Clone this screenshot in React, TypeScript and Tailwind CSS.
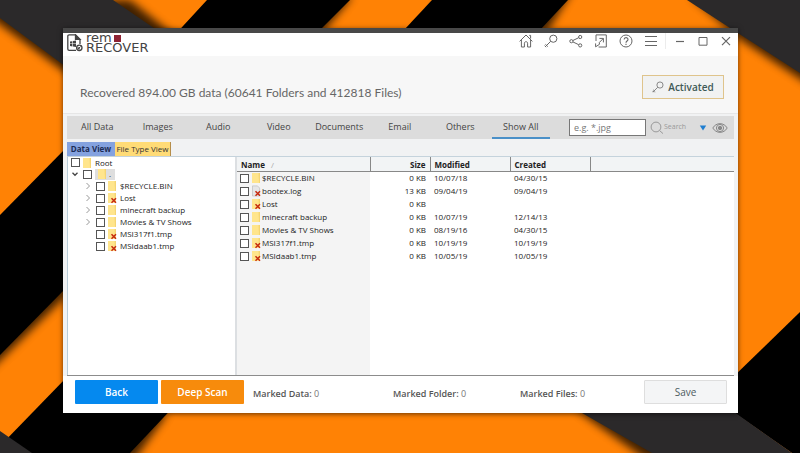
import type { ReactNode } from 'react';
import clsx from 'clsx';

type IconProps = {
	className?: string;
};

type TreeItem = {
	name: string;
	deleted?: boolean;
	expandable?: boolean;
};

type FileRow = {
	name: string;
	size: string;
	modified: string;
	created: string;
	kind?: 'folder' | 'file';
	deleted?: boolean;
};

const categories = [
	'All Data',
	'Images',
	'Audio',
	'Video',
	'Documents',
	'Email',
	'Others',
	'Show All',
];

const treeItems: TreeItem[] = [
	{ name: '$RECYCLE.BIN', expandable: true },
	{ name: 'Lost', expandable: true, deleted: true },
	{ name: 'minecraft backup', expandable: true },
	{ name: 'Movies & TV Shows', expandable: true },
	{ name: 'MSI317f1.tmp', deleted: true },
	{ name: 'MSIdaab1.tmp', deleted: true },
];

const files: FileRow[] = [
	{ name: '$RECYCLE.BIN', size: '0 KB', modified: '10/07/18', created: '04/30/15' },
	{ name: 'bootex.log', size: '13 KB', modified: '09/04/19', created: '09/04/19', kind: 'file', deleted: true },
	{ name: 'Lost', size: '0 KB', modified: '', created: '', deleted: true },
	{ name: 'minecraft backup', size: '0 KB', modified: '10/07/19', created: '12/14/13' },
	{ name: 'Movies & TV Shows', size: '0 KB', modified: '08/19/16', created: '04/30/15' },
	{ name: 'MSI317f1.tmp', size: '0 KB', modified: '10/19/19', created: '10/19/19', deleted: true },
	{ name: 'MSIdaab1.tmp', size: '0 KB', modified: '10/05/19', created: '10/05/19', deleted: true },
];

function Wallpaper() {
	return (
		<svg
			viewBox="0 0 800 453"
			preserveAspectRatio="xMidYMid slice"
			className="absolute inset-0 h-full w-full"
			aria-hidden="true"
		>
			<defs>
				<filter id="soft" x="-20%" y="-20%" width="140%" height="140%">
					<feGaussianBlur stdDeviation="4" />
				</filter>
			</defs>
			<rect width="800" height="453" fill="#ff8205" />
			{/* Shadows thrown by the bands */}
			<g fill="#000" opacity="0.75" filter="url(#soft)">
				<path d="M-20 0 130 0 180 40 100 90 62 70 -20 10Z" />
				<path d="M207 10 353 -4 323 32 240 60Z" />
				<path d="M440 -10H573L547 32H430Z" />
				<path d="M-20 255 66 171 66 296 -20 380Z" />
				<path d="M62 410 168 413 134 460 40 460Z" />
				<path d="M690 -4H820V92L738 38Z" />
				<path d="M576 410H740V460H647Z" />
			</g>
			<path d="M207 0H350L320 30 240 116H100Z" fill="#000" />
			<path d="M432 0H568L540 30H404Z" fill="#000" />
			<path d="M0 215 66 148V288L0 355Z" fill="#000" />
			<path d="M0 446 66 378 180 400 130 453H0Z" fill="#000" />
			<path d="M0 0H113L180 46 100 92 0 18Z" fill="#2b292a" />
			<path d="M0 431 32 453H0Z" fill="#2b292a" />
			<path d="M687 0H800V73L730 28Z" fill="#2b292a" />
			<path d="M800 312V453H792L730 410V380Z" fill="#000" />
			<path d="M575 409H730L792 453H652Z" fill="#2b292a" />
		</svg>
	);
}

function LogoMark() {
	return (
		<svg viewBox="0 0 16 18" className="mt-px h-[18px] w-4" fill="none" stroke="#444" strokeWidth="1.3">
			<path d="M9 16.3H2.2C1.3 16.3.8 15.8.8 15V2.2C.8 1.4 1.3.9 2.2.9H8.5L13 5.4V10" />
			<path d="M8.5.9V5.4H13Z" fill="#444" />
			<path d="M3 7.6 5.4 7.2V9.5H3ZM6 7.1 9 6.6V9.5H6ZM3 10.1H5.4V12.4L3 12ZM6 10.1H9V12.9L6 12.5Z" fill="#444" stroke="none" />
			<circle cx="12.3" cy="13.8" r="2.7" fill="#fff" />
			<path d="M11 14.8 13.6 12.6M11.1 12.8V14.8H13" strokeWidth="1" />
		</svg>
	);
}

function HomeIcon() {
	return (
		<svg viewBox="0 0 14 14" className="size-3.5" fill="none" stroke="currentColor">
			<path d="M.6 7.4 7 1 13.4 7.4M2.4 6V13H5.4V9.2C5.4 7.2 8.6 7.2 8.6 9.2V13H11.6V6M10.3 1.4H11.6V4.6" />
		</svg>
	);
}

function KeyIcon({ className = 'size-3.5' }: IconProps) {
	return (
		<svg viewBox="0 0 14 14" className={className} fill="none" stroke="currentColor">
			<circle cx="9.3" cy="4.7" r="3.6" />
			<path d="M6.7 7.3 1 13M1.4 10.3 3.8 12.6M.6 11.6 2.2 13.2" />
		</svg>
	);
}

function ShareIcon() {
	return (
		<svg viewBox="0 0 14 14" className="size-3.5" fill="none" stroke="currentColor">
			<circle cx="2.4" cy="7.2" r="1.6" />
			<circle cx="11.2" cy="3" r="1.6" />
			<circle cx="11.2" cy="11.4" r="1.6" />
			<path d="M3.9 6.5 9.7 3.7M3.9 7.9 9.7 10.7" />
		</svg>
	);
}

function ExportIcon() {
	return (
		<svg viewBox="0 0 14 14" className="size-3.5" fill="none" stroke="currentColor">
			<path d="M2 7V.9H12.3V13H4.6" />
			<path d="M5.4 4.4H9.4V8.4M9.2 4.6 5.4 8.4V10.4L1.6 12.8V9.4" />
		</svg>
	);
}

function HelpIcon() {
	return (
		<svg viewBox="0 0 14 14" className="size-3.5" fill="none" stroke="currentColor">
			<circle cx="7" cy="7" r="6" />
			<path d="M5.1 5.6C5.1 3 9 3.1 9 5.4 9 7 7 7 7 8.8M7 9.8V11" strokeWidth="1.1" />
		</svg>
	);
}

function MenuIcon() {
	return (
		<svg viewBox="0 0 14 14" className="size-3.5" fill="none" stroke="currentColor">
			<path d="M1 2.5H13M1 7.5H13M1 11.5H13" />
		</svg>
	);
}

function MinimizeIcon() {
	return (
		<svg viewBox="0 0 14 14" className="size-3.5" fill="none" stroke="currentColor">
			<path d="M3 7.5H11" strokeWidth="1.2" />
		</svg>
	);
}

function MaximizeIcon() {
	return (
		<svg viewBox="0 0 14 14" className="size-3.5" fill="none" stroke="currentColor">
			<path d="M3 3.5H11V11.2H3Z" />
		</svg>
	);
}

function CloseIcon() {
	return (
		<svg viewBox="0 0 14 14" className="size-3.5" fill="none" stroke="currentColor">
			<path d="M3 3.2 11 11.2M11 3.2 3 11.2" strokeWidth="1.2" />
		</svg>
	);
}

function SearchIcon() {
	return (
		<svg viewBox="0 0 14 14" className="size-3.5" fill="none" stroke="currentColor">
			<circle cx="6" cy="6" r="4.9" />
			<path d="M9.6 9.6 13 12.6" />
		</svg>
	);
}

function EyeIcon() {
	return (
		<svg viewBox="0 0 16 12" className="h-3 w-4" fill="none" stroke="currentColor">
			<path d="M.8 6C4 .2 12 .2 15.2 6 12 11.8 4 11.8.8 6Z" />
			<circle cx="8" cy="6" r="3.6" />
			<circle cx="8" cy="6" r="1.7" fill="currentColor" />
		</svg>
	);
}

function EntryIcon({ kind = 'folder', deleted }: { kind?: 'folder' | 'file'; deleted?: boolean }) {
	return (
		<svg viewBox="0 0 10 12" className="h-3 w-2.5 shrink-0" aria-hidden="true">
			{kind === 'folder' ? (
				<>
					<path d="M1 1H7.5L9 2V11H1Z" fill="#ffe58c" />
					<path d="M7.5 1H9V11H8Z" fill="#f5d573" />
				</>
			) : (
				<path d="M1.5.9H6.5L8.6 3V11H1.5Z" fill="#e6e6e6" stroke="#b5b5b5" strokeWidth="0.6" />
			)}
			{deleted && <path d="M4.5 6.2 9 10.7M9 6.2 4.5 10.7" stroke="#c62a10" strokeWidth="1.5" />}
		</svg>
	);
}

function Chevron({ open }: { open?: boolean }) {
	return (
		<svg viewBox="0 0 8 8" className="size-2" fill="none" stroke={open ? '#444' : '#999'}>
			<path d={open ? 'M1.5 2.8 4 5.3 6.5 2.8' : 'M2.5 1 5.5 4 2.5 7'} strokeWidth={open ? 1.3 : 1} />
		</svg>
	);
}

function CheckBox({ label }: { label: string }) {
	return (
		<input
			type="checkbox"
			aria-label={label}
			className="size-[9px] shrink-0 appearance-none border border-[#555] bg-white checked:bg-[#555]"
		/>
	);
}

function ToolButton({ label, className, children }: { label: string; className: string; children: ReactNode }) {
	return (
		<button type="button" aria-label={label} className={clsx('flex h-4 items-center justify-center', className)}>
			{children}
		</button>
	);
}

function TitleBar() {
	return (
		<header className="flex h-[23px] items-start bg-white pr-px pl-1 text-[#666]">
			<div className="flex items-start gap-[3px]">
				<LogoMark />
				<p className="font-['DejaVu_Sans',sans-serif] text-[13px] leading-[10px] text-[#444]">
					rem
					<span className="ml-0.5 inline-block size-[7px] bg-[#8f2334]" />
					<br />
					RECOVER
				</p>
			</div>
			<div className="ml-auto flex items-center">
				<ToolButton label="Home" className="w-[25px]"><HomeIcon /></ToolButton>
				<ToolButton label="License" className="w-[25px]"><KeyIcon /></ToolButton>
				<ToolButton label="Share" className="w-[25px]"><ShareIcon /></ToolButton>
				<ToolButton label="Export" className="w-[25px]"><ExportIcon /></ToolButton>
				<ToolButton label="Help" className="w-[25px]"><HelpIcon /></ToolButton>
				<ToolButton label="Menu" className="w-[25px]"><MenuIcon /></ToolButton>
				<span className="mx-0.5 h-4 w-px bg-[#ececec]" />
				<ToolButton label="Minimize" className="w-[23px]"><MinimizeIcon /></ToolButton>
				<ToolButton label="Maximize" className="w-[23px]"><MaximizeIcon /></ToolButton>
				<ToolButton label="Close" className="w-[23px]"><CloseIcon /></ToolButton>
			</div>
		</header>
	);
}

function Summary() {
	return (
		<div className="flex h-[58px] items-start justify-between border-b border-[#e6e6e6] bg-[#f7f7f7] pr-3.5 pl-[17px]">
			<h1 className="pt-7 font-['Lato','Open_Sans',sans-serif] text-[12px] leading-[18px] text-[#666]">
				Recovered 894.00 GB data (60641 Folders and 412818 Files)
			</h1>
			<button
				type="button"
				className="mt-[19px] flex h-6 w-[82px] items-center justify-center gap-1 border border-[#dfc48c] bg-[#f1f2f2] text-[10px] font-semibold text-[#3f5a57]"
			>
				<KeyIcon className="size-3 text-[#777]" />
				Activated
			</button>
		</div>
	);
}

function CategoryBar() {
	return (
		<div className="mx-1 mt-0.5 flex h-[23px] items-center bg-[#dcdcdc]">
			<nav className="grid h-full flex-1 grid-cols-8">
				{categories.map((category) => (
					<button
						key={category}
						type="button"
						className="flex flex-col items-center text-[9px] leading-[21px] text-[#444]"
					>
						{category}
						{category === 'Show All' && <span className="h-0.5 w-[58px] bg-[#4a90c8]" />}
					</button>
				))}
			</nav>
			<form className="ml-[18px] flex items-center pr-1.5" onSubmit={(e) => e.preventDefault()}>
				<input
					type="text"
					aria-label="Search pattern"
					placeholder="e.g. *.jpg"
					className="h-[17px] w-[77px] border border-[#777] bg-white px-1 text-[9px] text-[#444] placeholder:text-[#777]"
				/>
				<button type="submit" className="ml-1 flex h-4 w-[41px] items-center text-[7px] text-[#999]">
					<SearchIcon />
					Search
				</button>
				<button type="button" aria-label="Search options" className="ml-2 flex h-4 w-2 items-center">
					<svg viewBox="0 0 8 6" className="h-1.5 w-2" fill="#1f7ed0">
						<path d="M.8.5H7.2L4 5.5Z" />
					</svg>
				</button>
				<button type="button" aria-label="Preview" className="ml-[5px] flex h-4 w-4 items-center text-[#888]">
					<EyeIcon />
				</button>
			</form>
		</div>
	);
}

function FolderTree() {
	return (
		<aside className="w-[168px] shrink-0 border-l border-[#b9cdd9] bg-white text-[8px] leading-3 text-[#222]">
			<ul>
				<li className="flex h-[11px] items-center pl-[3px]">
					<CheckBox label="Root" />
					<span className="ml-0.5"><EntryIcon /></span>
					<span className="ml-[3px]">Root</span>
				</li>
				<li>
					<div className="flex h-3 items-center pl-[3px]">
						<Chevron open />
						<span className="ml-1 flex"><CheckBox label="." /></span>
						<span className="ml-[3px] flex h-[11px] items-center gap-0.5 bg-[#dedede] pr-1 pl-0.5">
							<EntryIcon />.
						</span>
					</div>
					<ul>
						{treeItems.map((item) => (
							<li key={item.name} className="flex h-3 items-center pl-4">
								<span className="w-3">{item.expandable && <Chevron />}</span>
								<CheckBox label={item.name} />
								<span className="ml-0.5"><EntryIcon deleted={item.deleted} /></span>
								<span className="ml-[3px]">{item.name}</span>
							</li>
						))}
					</ul>
				</li>
			</ul>
		</aside>
	);
}

function FileTable() {
	return (
		<div className="relative flex-1 border-l-2 border-[#dcdfe2] bg-white">
			<div className="absolute inset-y-0 left-0 w-[133px] bg-[#f4f4f4]" />
			<table className="relative w-full table-fixed border-collapse text-[8px] leading-3 text-[#222]">
				<colgroup>
					<col className="w-[133px]" />
					<col className="w-[60px]" />
					<col className="w-[80px]" />
					<col className="w-[80px]" />
					<col />
				</colgroup>
				<thead>
					<tr className="border-b border-[#888] bg-[#f2f4f5] text-left text-[#222]">
						<th className="border-r border-[#888] p-0 pt-0.5 pl-1">
							Name <span className="ml-1 font-normal text-[#aaa]">/</span>
						</th>
						<th className="border-r border-[#888] p-0 pt-0.5 pr-1 text-right">Size</th>
						<th className="border-r border-[#888] p-0 pt-0.5 pl-1">Modified</th>
						<th className="border-r border-[#888] p-0 pt-0.5 pl-1">Created</th>
						<th className="p-0" />
					</tr>
				</thead>
				<tbody>
					{files.map((file) => (
						<tr key={file.name} className="h-[13px]">
							<td className="p-0">
								<div className="flex h-3 items-center pl-[3px]">
									<CheckBox label={file.name} />
									<span className="ml-0.5"><EntryIcon kind={file.kind} deleted={file.deleted} /></span>
									<span className="ml-px">{file.name}</span>
								</div>
							</td>
							<td className="p-0 pr-1 text-right">{file.size}</td>
							<td className="p-0 pl-1">{file.modified}</td>
							<td className="p-0 pl-1">{file.created}</td>
							<td className="p-0" />
						</tr>
					))}
				</tbody>
			</table>
		</div>
	);
}

function Stat({ label, value, className }: { label: string; value: number; className?: string }) {
	return (
		<div className={clsx('text-[9px] font-semibold text-[#555]', className)}>
			{label}: <span className="font-normal text-[#777]">{value}</span>
		</div>
	);
}

function Footer() {
	return (
		<footer className="flex h-[37px] items-start bg-white pt-1 pr-[11px] pl-3 text-[10px]">
			<button type="button" className="h-6 w-[83px] rounded-[1px] bg-[#0589ef] font-semibold text-white">
				Back
			</button>
			<button type="button" className="ml-[3px] h-6 w-[83px] rounded-[1px] bg-[#f78b0c] font-semibold text-white">
				Deep Scan
			</button>
			<div className="flex h-[27px] flex-1 items-center pl-[9px]">
				<Stat label="Marked Data" value={0} className="w-[140px]" />
				<Stat label="Marked Folder" value={0} className="w-[127px]" />
				<Stat label="Marked Files" value={0} />
			</div>
			<button type="button" className="h-6 w-[83px] rounded-[1px] border border-[#dedede] bg-[#f4f5f6] text-[#4c5b60]">
				Save
			</button>
		</footer>
	);
}

export default function App() {
	return (
		<div className="relative flex min-h-screen flex-col overflow-hidden pt-7 pr-[62px] pb-10 pl-[63px] font-['Open_Sans','Noto_Sans',sans-serif]">
			<Wallpaper />
			<main className="relative flex flex-1 flex-col border-t-[5px] border-[#484848] bg-[#f1f2f3] shadow-[0_1px_5px_rgba(0,0,0,0.6)]">
				<TitleBar />
				<Summary />
				<CategoryBar />
				<div className="mx-1 mt-[3px] flex h-[14px] items-stretch text-[8px] text-[#333]">
					<button type="button" className="w-12 bg-[#84a2df] font-bold whitespace-nowrap text-[#1c2c55]">
						Data View
					</button>
					<button type="button" className="w-14 border-r border-[#b58d4a] bg-[#ffdb76] whitespace-nowrap">
						File Type View
					</button>
				</div>
				<div className="mx-1 flex flex-1 border-t border-b border-t-[#c5d3dc] border-b-[#8c8c8c]">
					<FolderTree />
					<FileTable />
				</div>
				<Footer />
			</main>
		</div>
	);
}
